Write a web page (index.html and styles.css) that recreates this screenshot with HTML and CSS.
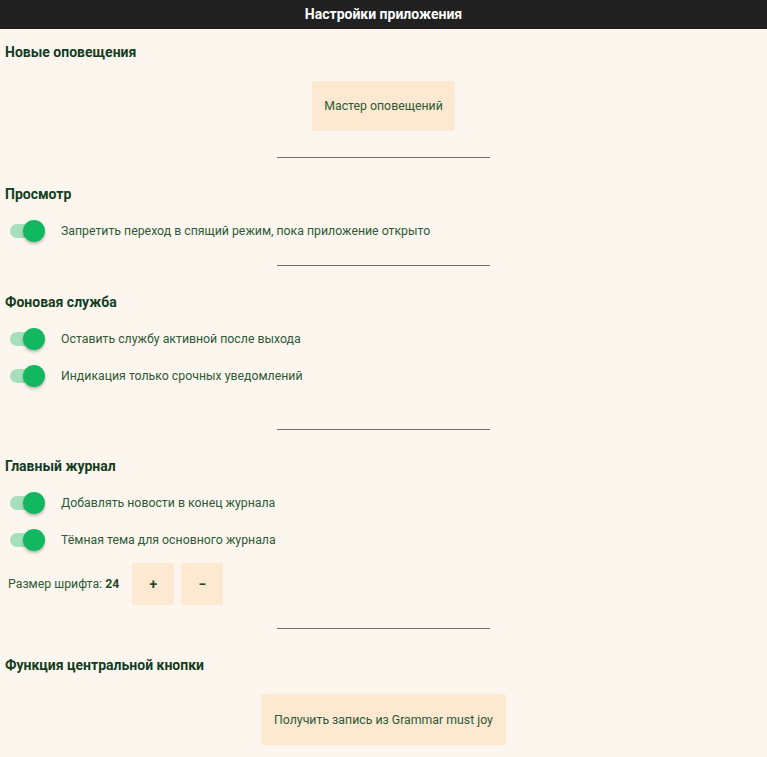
FILE: index.html
```html
<!DOCTYPE html>
<html lang="ru">
<head>
<meta charset="utf-8">
<title>Настройки приложения</title>
<link rel="stylesheet" href="styles.css">
</head>
<body>
<header class="topbar">Настройки приложения</header>

<h2 class="heading heading--first">Новые оповещения</h2>
<div class="btn-wrap"><button class="btn btn--wizard">Мастер оповещений</button></div>
<hr class="divider divider--d1">

<h2 class="heading">Просмотр</h2>
<div class="rows">
  <div class="row"><span class="toggle"><span class="thumb"></span></span><span class="label">Запретить переход в спящий режим, пока приложение открыто</span></div>
</div>
<hr class="divider divider--d2">

<h2 class="heading">Фоновая служба</h2>
<div class="rows">
  <div class="row"><span class="toggle"><span class="thumb"></span></span><span class="label">Оставить службу активной после выхода</span></div>
  <div class="row"><span class="toggle"><span class="thumb"></span></span><span class="label">Индикация только срочных уведомлений</span></div>
</div>
<hr class="divider divider--d3">

<h2 class="heading">Главный журнал</h2>
<div class="rows">
  <div class="row"><span class="toggle"><span class="thumb"></span></span><span class="label">Добавлять новости в конец журнала</span></div>
  <div class="row"><span class="toggle"><span class="thumb"></span></span><span class="label">Тёмная тема для основного журнала</span></div>
</div>
<div class="font-row">
  <span class="font-label">Размер шрифта: <b>24</b></span>
  <button class="btn btn--small">+</button>
  <button class="btn btn--small">−</button>
</div>
<hr class="divider divider--d4">

<h2 class="heading">Функция центральной кнопки</h2>
<div class="btn-wrap"><button class="btn btn--center">Получить запись из Grammar must joy</button></div>
</body>
</html>
```
FILE: styles.css
```css
* { box-sizing: border-box; }
html, body { margin: 0; padding: 0; }
body {
  background: #fdf6ef;
  font-family: Roboto, "Noto Sans", sans-serif;
  color: #2c5a36;
  width: 767px;
  height: 757px;
  overflow: hidden;
}
.topbar {
  height: 29px;
  background: #212121;
  color: #ffffff;
  font-weight: 700;
  font-size: 14px;
  line-height: 29px;
  text-align: center;
}
.heading {
  margin: 27px 0 0 5px;
  font-size: 14px;
  line-height: 18px;
  font-weight: 700;
  color: #123d1f;
}
.heading--first { margin-top: 14px; }
.btn-wrap {
  display: flex;
  justify-content: center;
  margin-top: 20px;
}
.btn {
  border: none;
  background: #fde8d1;
  color: #2c5a36;
  font-family: Roboto, "Noto Sans", sans-serif;
  font-size: 12.3px;
  border-radius: 2px;
  padding: 0;
}
.btn--wizard { width: 143px; height: 50px; }
.btn--center { width: 245px; height: 51px; }
.divider {
  width: 213px;
  height: 1px;
  border: none;
  background: #6f6f6f;
  margin: 0 auto;
}
.divider--d1 { margin-top: 26px; }
.divider--d2 { margin-top: 16px; }
.divider--d3 { margin-top: 35px; }
.divider--d4 { margin-top: 23px; }
.rows { margin-top: 9px; }
.row {
  height: 37px;
  display: flex;
  align-items: center;
  font-size: 12.3px;
  padding-top: 1px;
}
.toggle {
  position: relative;
  width: 34px;
  height: 14px;
  margin-left: 10px;
  margin-right: 17px;
  border-radius: 7px;
  background: #a6dfbc;
}
.thumb {
  position: absolute;
  right: -1px;
  top: -4px;
  width: 22px;
  height: 22px;
  border-radius: 50%;
  background: #12b860;
  box-shadow: 0 2px 3px rgba(0, 0, 0, 0.25);
}
.label { color: #2c5a36; }
.font-row {
  display: flex;
  align-items: center;
  margin-top: 5px;
  padding-left: 8px;
  gap: 7px;
  height: 42px;
}
.font-label { font-size: 12.3px; margin-right: 6px; }
.font-label b { font-weight: 700; color: #1f4a2a; }
.btn--small {
  width: 42px;
  height: 42px;
  font-size: 14px;
  font-weight: 700;
  color: #1f4a2a;
}
```
